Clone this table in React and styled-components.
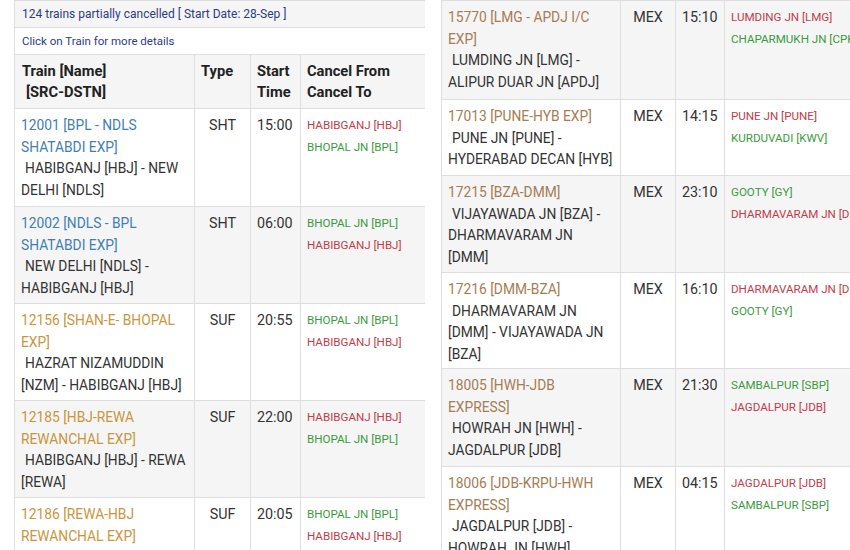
import React from 'react';
import styled, { createGlobalStyle } from 'styled-components';

const GlobalStyle = createGlobalStyle`
  body {
    margin: 0;
    background: #fff;
    font-family: Roboto, "Liberation Sans", sans-serif;
  }
`;

const RED = '#c23d4a';
const GREEN = '#3b9b3e';

const leftRows = [
  {
    link: ['12001 [BPL - NDLS', 'SHATABDI EXP]'],
    tone: '#3f80b3',
    route: ['HABIBGANJ [HBJ] - NEW', 'DELHI [NDLS]'],
    type: 'SHT',
    time: '15:00',
    stops: [['HABIBGANJ [HBJ]', RED], ['BHOPAL JN [BPL]', GREEN]],
    height: 98,
  },
  {
    link: ['12002 [NDLS - BPL', 'SHATABDI EXP]'],
    tone: '#3f80b3',
    route: ['NEW DELHI [NDLS] -', 'HABIBGANJ [HBJ]'],
    type: 'SHT',
    time: '06:00',
    stops: [['BHOPAL JN [BPL]', GREEN], ['HABIBGANJ [HBJ]', RED]],
    height: 97,
  },
  {
    link: ['12156 [SHAN-E- BHOPAL', 'EXP]'],
    tone: '#c8963e',
    route: ['HAZRAT NIZAMUDDIN', '[NZM] - HABIBGANJ [HBJ]'],
    type: 'SUF',
    time: '20:55',
    stops: [['BHOPAL JN [BPL]', GREEN], ['HABIBGANJ [HBJ]', RED]],
    height: 97,
  },
  {
    link: ['12185 [HBJ-REWA', 'REWANCHAL EXP]'],
    tone: '#c8963e',
    route: ['HABIBGANJ [HBJ] - REWA', '[REWA]'],
    type: 'SUF',
    time: '22:00',
    stops: [['HABIBGANJ [HBJ]', RED], ['BHOPAL JN [BPL]', GREEN]],
    height: 97,
  },
  {
    link: ['12186 [REWA-HBJ', 'REWANCHAL EXP]'],
    tone: '#c8963e',
    route: ['HABIBGANJ [HBJ] - BHOPAL', 'JN [BPL]'],
    type: 'SUF',
    time: '20:05',
    stops: [['BHOPAL JN [BPL]', GREEN], ['HABIBGANJ [HBJ]', RED]],
    height: 97,
  },
];

const rightRows = [
  {
    link: ['15770 [LMG - APDJ I/C', 'EXP]'],
    route: ['LUMDING JN [LMG] -', 'ALIPUR DUAR JN [APDJ]'],
    time: '15:10',
    stops: [['LUMDING JN [LMG]', RED], ['CHAPARMUKH JN [CPK]', GREEN]],
    height: 99,
  },
  {
    link: ['17013 [PUNE-HYB EXP]'],
    route: ['PUNE JN [PUNE] -', 'HYDERABAD DECAN [HYB]'],
    time: '14:15',
    stops: [['PUNE JN [PUNE]', RED], ['KURDUVADI [KWV]', GREEN]],
    height: 76,
  },
  {
    link: ['17215 [BZA-DMM]'],
    route: ['VIJAYAWADA JN [BZA] -', 'DHARMAVARAM JN', '[DMM]'],
    time: '23:10',
    stops: [['GOOTY [GY]', GREEN], ['DHARMAVARAM JN [DMM]', RED]],
    height: 97,
  },
  {
    link: ['17216 [DMM-BZA]'],
    route: ['DHARMAVARAM JN', '[DMM] - VIJAYAWADA JN', '[BZA]'],
    time: '16:10',
    stops: [['DHARMAVARAM JN [DMM]', RED], ['GOOTY [GY]', GREEN]],
    height: 96,
  },
  {
    link: ['18005 [HWH-JDB', 'EXPRESS]'],
    route: ['HOWRAH JN [HWH] -', 'JAGDALPUR [JDB]'],
    time: '21:30',
    stops: [['SAMBALPUR [SBP]', GREEN], ['JAGDALPUR [JDB]', RED]],
    height: 98,
  },
  {
    link: ['18006 [JDB-KRPU-HWH', 'EXPRESS]'],
    route: ['JAGDALPUR [JDB] -', 'HOWRAH JN [HWH]'],
    time: '04:15',
    stops: [['JAGDALPUR [JDB]', RED], ['SAMBALPUR [SBP]', GREEN]],
    height: 98,
  },
];

export default function App() {
  return (
    <>
      <GlobalStyle />
      <Page>
        <Panel $width={411}>
          <Grid $width={412}>
            <colgroup>
              <col style={{ width: 180 }} />
              <col style={{ width: 56 }} />
              <col style={{ width: 50 }} />
              <col />
            </colgroup>
            <tbody>
              <Row $height={27} $shade>
                <NoteCell colSpan={4} $size={12}>
                  124 trains partially cancelled [ Start Date: 28-Sep ]
                </NoteCell>
              </Row>
              <Row $height={27}>
                <NoteCell colSpan={4} $size={11.5}>
                  Click on Train for more details
                </NoteCell>
              </Row>
              <Row $height={54} $shade>
                <HeadCell>
                  Train [Name]
                  <br />
                  <Indent>[SRC-DSTN]</Indent>
                </HeadCell>
                <HeadCell>Type</HeadCell>
                <HeadCell>
                  Start
                  <br />
                  Time
                </HeadCell>
                <HeadCell>
                  Cancel From
                  <br />
                  Cancel To
                </HeadCell>
              </Row>
              {leftRows.map((r, i) => (
                <TrainRow key={r.link[0]} row={r} shade={i % 2 === 1} tone={r.tone} />
              ))}
            </tbody>
          </Grid>
        </Panel>
        <Panel $width={409}>
          <Grid $width={480}>
            <colgroup>
              <col style={{ width: 179 }} />
              <col style={{ width: 55 }} />
              <col style={{ width: 49 }} />
              <col />
            </colgroup>
            <tbody>
              {rightRows.map((r, i) => (
                <TrainRow
                  key={r.link[0]}
                  row={{ ...r, type: 'MEX' }}
                  shade={i % 2 === 0}
                  tone="#a67c52"
                />
              ))}
            </tbody>
          </Grid>
        </Panel>
      </Page>
    </>
  );
}

function TrainRow({ row, shade, tone }) {
  return (
    <Row $height={row.height} $shade={shade}>
      <Cell>
        <TrainLink $tone={tone}>
          {row.link.map((l, i) => (
            <React.Fragment key={i}>
              {i > 0 && <br />}
              {l}
            </React.Fragment>
          ))}
        </TrainLink>
        <Route>
          {row.route.map((l, i) => (
            <React.Fragment key={i}>
              {i > 0 && <br />}
              {i === 0 ? <Indent>{l}</Indent> : l}
            </React.Fragment>
          ))}
        </Route>
      </Cell>
      <Cell $center>{row.type}</Cell>
      <Cell>{row.time}</Cell>
      <Cell>
        {row.stops.map(([name, color]) => (
          <Stop key={name} $color={color}>
            {name}
          </Stop>
        ))}
      </Cell>
    </Row>
  );
}

const Page = styled.div`
  display: flex;
  gap: 16px;
  padding-left: 14px;
  height: 550px;
  overflow: hidden;
`;

const Panel = styled.div`
  width: ${(p) => p.$width}px;
  flex-shrink: 0;
  overflow: hidden;
`;

const Grid = styled.table`
  width: ${(p) => p.$width}px;
  border-collapse: collapse;
  table-layout: fixed;
  color: #333;
`;

const Row = styled.tr`
  height: ${(p) => p.$height}px;
  background: ${(p) => (p.$shade ? '#f5f5f5' : '#fff')};
`;

const Cell = styled.td`
  border: 1px solid #dedede;
  padding: 6px 6px 0 6px;
  vertical-align: top;
  font-size: 14.3px;
  line-height: 21.5px;
  text-align: ${(p) => (p.$center ? 'center' : 'left')};
  color: #333;
`;

const NoteCell = styled.td`
  border: 1px solid #dedede;
  padding: 0 7px;
  vertical-align: middle;
  font-size: ${(p) => p.$size}px;
  color: #2f3b82;
`;

const HeadCell = styled.th`
  border: 1px solid #dedede;
  padding: 6px 6px 0 6px;
  vertical-align: top;
  text-align: left;
  font-size: 14.7px;
  line-height: 21px;
  font-weight: 700;
  color: #222;

  &:first-child {
    padding-left: 7px;
  }
`;

const TrainLink = styled.div`
  font-size: 13.8px;
  color: ${(p) => p.$tone};
`;

const Route = styled.div`
  font-size: 13.8px;
  color: #333;
`;

const Indent = styled.span`
  padding-left: 4px;
`;

const Stop = styled.div`
  font-size: 11.6px;
  line-height: 21.5px;
  color: ${(p) => p.$color};
  white-space: nowrap;
`;
